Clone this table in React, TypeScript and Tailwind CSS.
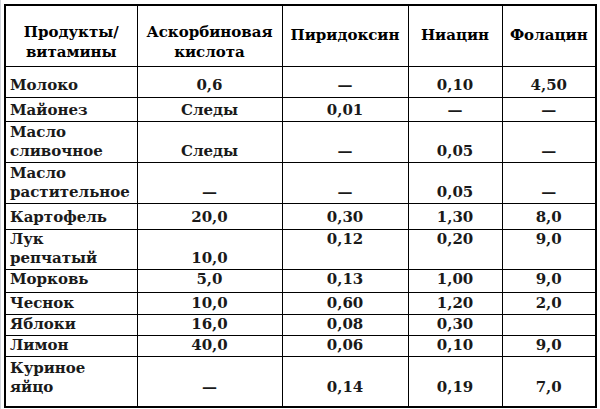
const head = ['Продукты/\nвитамины', 'Аскорбиновая\nкислота', 'Пиридоксин', 'Ниацин', 'Фолацин']

type Row = {
  name: string
  values: string[]
  h: string
  pb?: string
  topValues?: boolean
}

const rows: Row[] = [
  { name: 'Молоко', values: ['0,6', '—', '0,10', '4,50'], h: 'h-[31px]', pb: 'pb-[2px]' },
  { name: 'Майонез', values: ['Следы', '0,01', '—', '—'], h: 'h-[24px]' },
  { name: 'Масло\nсливочное', values: ['Следы', '—', '0,05', '—'], h: 'h-[41px]' },
  { name: 'Масло\nрастительное', values: ['—', '—', '0,05', '—'], h: 'h-[41px]' },
  { name: 'Картофель', values: ['20,0', '0,30', '1,30', '8,0'], h: 'h-[26px]', pb: 'pb-[2px]' },
  { name: 'Лук\nрепчатый', values: ['10,0', '0,12', '0,20', '9,0'], h: 'h-[40px]', topValues: true },
  { name: 'Морковь', values: ['5,0', '0,13', '1,00', '9,0'], h: 'h-[23px]', pb: 'pb-[3px]' },
  { name: 'Чеснок', values: ['10,0', '0,60', '1,20', '2,0'], h: 'h-[22px]' },
  { name: 'Яблоки', values: ['16,0', '0,08', '0,30', ''], h: 'h-[21px]' },
  { name: 'Лимон', values: ['40,0', '0,06', '0,10', '9,0'], h: 'h-[21px]' },
  { name: 'Куриное\nяйцо', values: ['—', '0,14', '0,19', '7,0'], h: 'h-[51px]', pb: 'pb-[9px]' },
]

const widths = ['w-[132px]', 'w-[145px]', 'w-[126px]', 'w-[94px]', 'w-[94px]']

export default function App() {
  return (
    <div className="w-[600px] h-[409px] bg-white overflow-hidden border-l border-l-gray-300 font-['DejaVu_Serif',serif] text-black">
      <table className="ml-[3px] mt-[4px] w-[591px] table-fixed border-collapse border-2 border-black font-['DejaVu_Serif',serif]">
        <colgroup>
          {widths.map((w, i) => (
            <col key={i} className={w} />
          ))}
        </colgroup>
        <thead>
          <tr className="h-[61px]">
            {head.map((t, i) => (
              <th
                key={i}
                className={`border border-black px-0 text-center text-[15px] leading-[20px] font-bold whitespace-pre-line ${
                  t.includes('\n') ? 'align-top pt-[16px]' : 'align-middle pb-[2px]'
                }`}
              >
                {t}
              </th>
            ))}
          </tr>
        </thead>
        <tbody className="text-[15px] leading-[19px] font-bold text-[#1a1a1a]">
          {rows.map((r, i) => (
            <tr key={i} className={r.h}>
              <td className={`border border-black p-0 pl-[4px] align-bottom whitespace-pre-line ${r.pb ?? 'pb-[1px]'}`}>
                {r.name}
              </td>
              {r.values.map((v, j) => (
                <td
                  key={j}
                  className={`border border-black p-0 text-center ${
                    r.topValues && j > 0 ? 'align-top pt-[0px]' : `align-bottom ${r.pb ?? 'pb-[1px]'}`
                  }`}
                >
                  {v}
                </td>
              ))}
            </tr>
          ))}
        </tbody>
      </table>
    </div>
  )
}
